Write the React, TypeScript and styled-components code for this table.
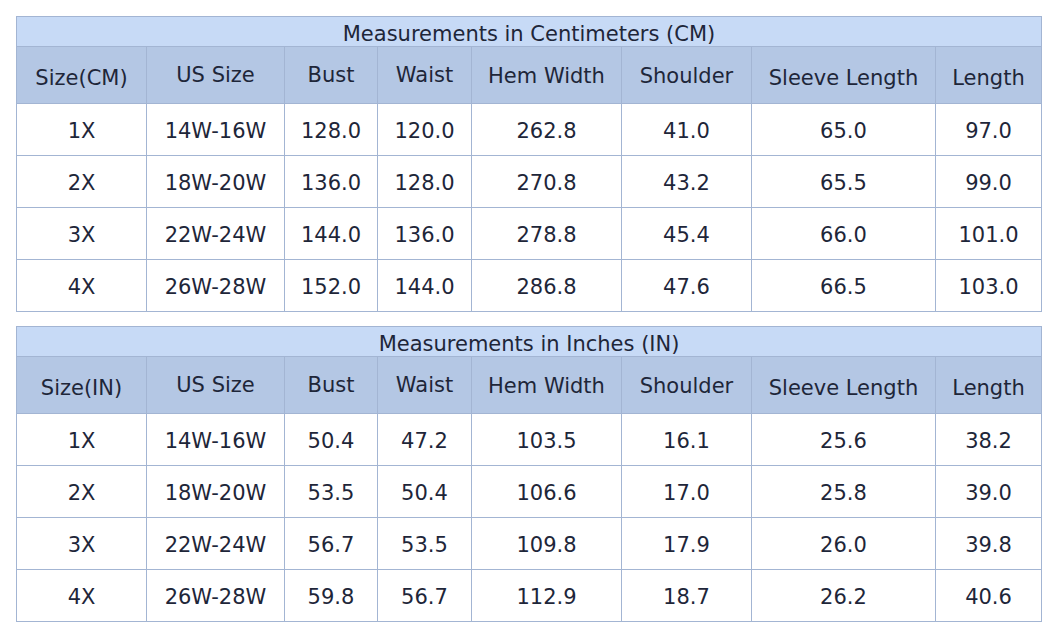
import React from 'react';
import styled, { createGlobalStyle } from 'styled-components';

const GlobalStyle = createGlobalStyle`
  html, body {
    margin: 0;
    padding: 0;
    background: #ffffff;
  }
  body {
    font-family: "DejaVu Sans", Verdana, sans-serif;
    color: #1e2639;
  }
`;

const Page = styled.div`
  display: flex;
  flex-direction: column;
  gap: 14px;
  padding: 16px 0 0 16px;
`;

const Table = styled.table`
  width: 1025px;
  border-collapse: collapse;
  table-layout: fixed;
  font-size: 21px;
`;

const TitleCell = styled.th`
  height: 25px;
  padding: 4px 0 0;
  background: #c7daf6;
  border: 1px solid #a3b5d3;
  font-weight: normal;
  text-align: center;
  vertical-align: middle;
  line-height: 24px;
`;

// lift: how far a heading sits above the row's middle, as in the reference
const HeadCell = styled.th<{ $lift: number }>`
  height: ${({ $lift }) => 50 - $lift}px;
  padding: 6px 0 ${({ $lift }) => $lift}px;
  background: #b4c7e4;
  border: 1px solid #a3b5d3;
  font-weight: normal;
  text-align: center;
  vertical-align: middle;
  line-height: 24px;
`;

const Cell = styled.td`
  height: 49px;
  padding: 2px 0 0;
  border: 1px solid #a3b5d3;
  text-align: center;
  vertical-align: middle;
  line-height: 24px;
`;

const columns = [
  { width: 130, lift: 0 },
  { width: 138, lift: 6 },
  { width: 93, lift: 6 },
  { width: 94, lift: 6 },
  { width: 150, lift: 4 },
  { width: 130, lift: 4 },
  { width: 184, lift: 0 },
  { width: 106, lift: 0 },
];

type Chart = {
  title: string;
  unit: string;
  rows: string[][];
};

const charts: Chart[] = [
  {
    title: 'Measurements in Centimeters (CM)',
    unit: 'Size(CM)',
    rows: [
      ['1X', '14W-16W', '128.0', '120.0', '262.8', '41.0', '65.0', '97.0'],
      ['2X', '18W-20W', '136.0', '128.0', '270.8', '43.2', '65.5', '99.0'],
      ['3X', '22W-24W', '144.0', '136.0', '278.8', '45.4', '66.0', '101.0'],
      ['4X', '26W-28W', '152.0', '144.0', '286.8', '47.6', '66.5', '103.0'],
    ],
  },
  {
    title: 'Measurements in Inches (IN)',
    unit: 'Size(IN)',
    rows: [
      ['1X', '14W-16W', '50.4', '47.2', '103.5', '16.1', '25.6', '38.2'],
      ['2X', '18W-20W', '53.5', '50.4', '106.6', '17.0', '25.8', '39.0'],
      ['3X', '22W-24W', '56.7', '53.5', '109.8', '17.9', '26.0', '39.8'],
      ['4X', '26W-28W', '59.8', '56.7', '112.9', '18.7', '26.2', '40.6'],
    ],
  },
];

const headings = ['US Size', 'Bust', 'Waist', 'Hem Width', 'Shoulder', 'Sleeve Length', 'Length'];

const SizeTable: React.FC<{ chart: Chart }> = ({ chart }) => {
  const labels = [chart.unit, ...headings];
  return (
    <Table>
      <colgroup>
        {columns.map((c, i) => (
          <col key={i} style={{ width: c.width }} />
        ))}
      </colgroup>
      <thead>
        <tr>
          <TitleCell colSpan={8}>{chart.title}</TitleCell>
        </tr>
        <tr>
          {labels.map((label, i) => (
            <HeadCell key={label} $lift={columns[i].lift}>
              {label}
            </HeadCell>
          ))}
        </tr>
      </thead>
      <tbody>
        {chart.rows.map((row) => (
          <tr key={row[0]}>
            {row.map((value, i) => (
              <Cell key={i}>{value}</Cell>
            ))}
          </tr>
        ))}
      </tbody>
    </Table>
  );
};

export default function App() {
  return (
    <>
      <GlobalStyle />
      <Page>
        {charts.map((chart) => (
          <SizeTable key={chart.unit} chart={chart} />
        ))}
      </Page>
    </>
  );
}
